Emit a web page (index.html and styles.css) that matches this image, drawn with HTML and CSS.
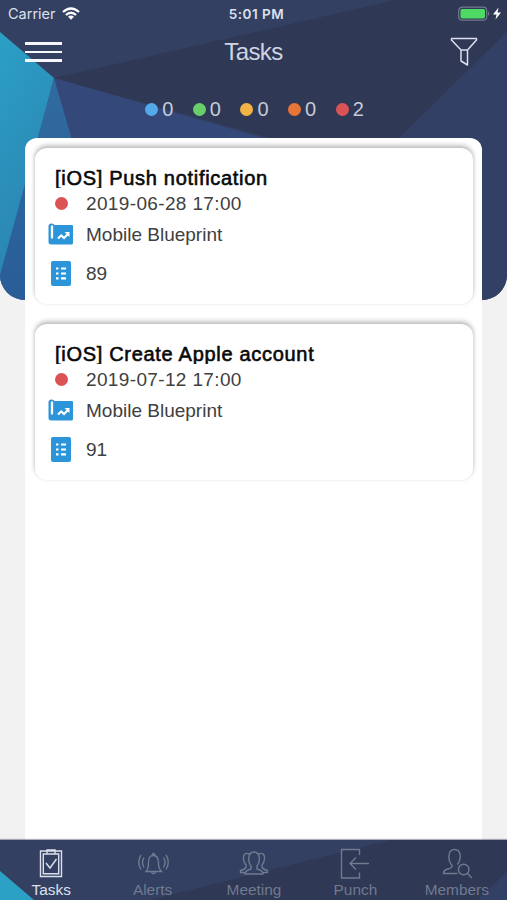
FILE: index.html
```html
<!DOCTYPE html>
<html lang="en">
<head>
<meta charset="utf-8">
<title>Tasks</title>
<link rel="stylesheet" href="styles.css">
</head>
<body>
<svg class="symbols" aria-hidden="true">
  <symbol id="blueprint" viewBox="0 0 26 23">
    <path d="M.5 19V3.500Q.5 .5 3.500 .5Q6 .5 6.500 2H24Q25 2 25 3V20Q25 21.500 23.500 21.500H3.500Q.5 21.500 .5 19Z" fill="#2c95da"/>
    <path d="M4 3.500V14.500" stroke="#fff" stroke-width="2.300" stroke-linecap="round" fill="none"/>
    <path d="M10 15.500l3.200-3 2.800 2.500 4-4" stroke="#fff" stroke-width="2.200" fill="none"/>
    <path d="M16.500 9h5v5z" fill="#fff"/>
  </symbol>
  <symbol id="list" viewBox="0 0 20 25">
    <rect width="20" height="25" rx="2" fill="#2c95da"/>
    <path d="M5 7.500h2.500M10 7.500h5M5 12.500h2.500M10 12.500h5M5 17.300h2.500M10 17.300h5" stroke="#fff" stroke-width="2.200" fill="none"/>
  </symbol>
</svg>
<div class="screen">
  <header class="hero">
    <svg class="facets" viewBox="0 0 507 300" preserveAspectRatio="none">
      <defs>
        <linearGradient id="teal" x1="0" y1="0" x2=".3" y2="1"><stop offset="0" stop-color="#2ba0c6"/><stop offset="1" stop-color="#2b82b0"/></linearGradient>
        <linearGradient id="blue" x1="0" y1="0" x2="0" y2="1"><stop offset="0" stop-color="#306b9e"/><stop offset="1" stop-color="#295d98"/></linearGradient>
      </defs>
      <rect width="507" height="300" fill="#334062"/>
      <path d="M54 78L396 0H507V32L399 138L270 138Z" fill="#2f3854"/>
      <path d="M507 32L399 138V300H507Z" fill="#334066"/>
      <path d="M54 78L270 140V300H54Z" fill="#34487a"/>
      <path d="M0 32L54 78L0 290Z" fill="url(#teal)"/>
      <path d="M54 78L72 140V300H0V275Z" fill="url(#blue)"/>
    </svg>
    <div class="status">
      <div class="carrier">Carrier
        <svg width="18" height="14" viewBox="0 0 18 14" fill="none" stroke="#fff" stroke-width="2.300"><path d="M1 5Q9-2 17 5M3.900 8Q9 3.500 14.100 8"/><path d="M9 12.800L6 9.700Q9 7.500 12 9.700Z" fill="#fff" stroke="none"/></svg>
      </div>
      <div class="clock">5:01 PM</div>
      <svg class="battery" width="44" height="16" viewBox="0 0 44 16"><rect x=".7" y="1.200" width="28" height="13" rx="3.500" fill="none" stroke="#747b8d" stroke-width="1.200"/><rect x="2.500" y="2.900" width="24.500" height="9.600" rx="1.700" fill="#4cd964"/><path d="M30 5.500q2.500 2.200 0 4.500z" fill="#747b8d"/><path d="M40.500 1.500L35 8.500H38.500L37.500 13.500L43 6.500H39.500Z" fill="#fff"/></svg>
    </div>
    <div class="toolbar">
      <div class="menu"><i></i><i></i><i></i></div>
      <h1>Tasks</h1>
      <svg class="funnel" width="28" height="30" viewBox="0 0 28 30" fill="none" stroke="#dce0ed" stroke-width="1.500" stroke-linejoin="round"><path d="M1.500 1.500H26.500V3L17.500 13V28L11 24V13L1.500 3ZM11 13H17.500"/></svg>
    </div>
    <div class="counts">
      <span><b class="dot sky"></b>0</span><span><b class="dot green"></b>0</span><span><b class="dot yellow"></b>0</span><span><b class="dot orange"></b>0</span><span><b class="dot red"></b>2</span>
    </div>
  </header>
  <main class="panel">
    <article class="card">
      <h2>[iOS] Push notification</h2>
      <div class="row date"><b class="dot red"></b><span>2019-06-28 17:00</span></div>
      <div class="row project"><svg width="26" height="23"><use href="#blueprint"/></svg><span>Mobile Blueprint</span></div>
      <div class="row number"><svg width="20" height="25"><use href="#list"/></svg><span>89</span></div>
    </article>
    <article class="card">
      <h2>[iOS] Create Apple account</h2>
      <div class="row date"><b class="dot red"></b><span>2019-07-12 17:00</span></div>
      <div class="row project"><svg width="26" height="23"><use href="#blueprint"/></svg><span>Mobile Blueprint</span></div>
      <div class="row number"><svg width="20" height="25"><use href="#list"/></svg><span>91</span></div>
    </article>
  </main>
  <nav class="tabs">
    <svg class="facets" viewBox="0 0 507 60"><rect width="507" height="60" fill="#334062"/><path d="M150 60L390 0H507V32L478 60Z" fill="#2f3854"/><path d="M507 32L478 60H507Z" fill="#334066"/><path d="M0 31L34 60H0Z" fill="#2ba1c6"/></svg>
    <a class="active"><svg viewBox="0 0 36 34"><path d="M7.500 5H28.500V30.500H7.500ZM10.300 8H25.700V27.700H10.300ZM14 4H22V8H14ZM13 17L17 22L23.500 13"/></svg><span>Tasks</span></a>
    <a><svg viewBox="0 0 36 34"><path d="M11 25.500Q13.500 23 13.500 17C13.500 11.500 15 9.500 18.500 9.500C22 9.500 23.500 11.500 23.500 17Q23.500 23 26.500 25.500ZM16 25.500Q18.500 30 21 25.500M17 9.500Q18.500 5 20 9.500M9 11.500Q6 16.500 9 21.500M28.500 11.500Q31.500 16.500 28.500 21.500M6 9Q1.500 16 6 23.500M31 9Q35.500 16 31 23.500"/></svg><span>Alerts</span></a>
    <a><svg viewBox="0 0 36 34"><path d="M9 28Q9 24.500 15 23V20C11.500 16 11.500 6 18 6C24.500 6 24.500 16 21 20V23Q27 24.500 27 28ZM13.500 8C9 6 7 9 7.500 13Q8 17 10 19V21Q9.500 23 4.500 24.500V26.500H9.500M22.500 8C27 6 29 9 28.500 13Q28 17 26 19V21Q26.500 23 31.500 24.500V26.500H26.500"/></svg><span>Meeting</span></a>
    <a><svg viewBox="0 0 36 34"><path d="M22.500 9V3.500H4.500V32H22.500V26.500M32 17.500H13M19 11.500L13 17.500L19 23.500"/></svg><span>Punch</span></a>
    <a><svg viewBox="0 0 36 34"><path d="M18.500 27.500H4.500Q4.500 24 9 23Q13.500 22 13 19.500C8.500 14 8.500 3.500 15.500 3.500C22.500 3.500 22.500 13 18.500 18.500M28.500 27.500L33 32"/><circle cx="24.700" cy="23.500" r="5.300"/></svg><span>Members</span></a>
  </nav>
</div>
</body>
</html>
```
FILE: styles.css
```css
* { box-sizing: border-box; }
body { margin: 0; background: #f2f2f2; font-family: "Liberation Sans", Arial, sans-serif; }
.symbols { position: absolute; width: 0; height: 0; }
.screen { width: 507px; height: 900px; display: flex; flex-direction: column; overflow: hidden; }
.hero { position: relative; flex: none; height: 300px; margin-bottom: -162px; border-radius: 0 0 25px 25px; overflow: hidden; color: #dce0ed; }
.facets { position: absolute; inset: 0; width: 100%; height: 100%; z-index: -1; }
.hero, .tabs { isolation: isolate; }
.status { height: 28px; display: grid; grid-template-columns: 1fr auto 1fr; align-items: center; padding: 0 5px 1px 8px; }
.carrier { display: flex; align-items: center; gap: 6px; font: 14.500px Inter, sans-serif; }
.clock { padding-left: 3px; font: 600 13.500px Inter, sans-serif; letter-spacing: .5px; }
.battery { justify-self: end; }
.toolbar { height: 50px; display: grid; grid-template-columns: 1fr auto 1fr; align-items: center; padding: 0 29px 2px 25px; }
.menu { width: 37px; display: grid; gap: 6px; }
.menu i { height: 2.500px; background: #f5f7fc; }
h1 { margin: 0; padding-left: 4px; font: 24px "Liberation Sans", Arial, sans-serif; letter-spacing: -.6px; color: #d0d5e3; }
.funnel { justify-self: end; }
.counts { display: flex; justify-content: center; gap: 19.500px; padding: 19px 0 0 2px; font: 20px/24px "Liberation Sans", Arial, sans-serif; color: #c5cad9; }
.counts span { display: flex; align-items: center; gap: 4px; }
.dot { display: block; width: 13px; height: 13px; border-radius: 50%; }
.sky { background: #54a9e9; }
.green { background: #66cf6a; }
.yellow { background: #f2b544; }
.orange { background: #e87538; }
.red { background: #dc5356; }
.panel { position: relative; flex: 1; margin: 0 25px; padding: 10px 9px; border-radius: 12px 12px 0 0; background: #fff; }
.card { height: 156px; margin: 0 0 20px 1px; padding: 18px 13px; border-radius: 12px; background: #fff; box-shadow: 0 -3px 5px rgba(0,0,0,.2), 0 -1px 4px rgba(0,0,0,.12); }
h2 { height: 22px; margin: 0 0 3px 7px; overflow: hidden; font: 20px/25px "Liberation Sans", Arial, sans-serif; letter-spacing: .7px; color: #090909; -webkit-text-stroke: .6px #090909; }
.row { display: grid; grid-template-columns: 26px auto; column-gap: 12px; align-items: center; justify-content: start; color: #404040; font: 19px/26px "Liberation Sans", Arial, sans-serif; }
.row > :first-child { justify-self: center; }
.row.date { letter-spacing: .36px; }
.row.date .dot { position: relative; top: -1px; }
.row.project { height: 36px; }
.row.project svg { position: relative; top: -1px; }
.row.number { height: 42px; }
.row.number svg { position: relative; top: -1px; }
.tabs { position: relative; flex: none; height: 60px; display: grid; grid-template-columns: repeat(5, 1fr); color: #707a90; box-shadow: 0 -1px 1px rgba(47,56,84,.4); }
.tabs a { display: flex; flex-direction: column; align-items: center; padding: 6px 0 0 1px; font: 15.400px/20px "Liberation Sans", Arial, sans-serif; }
.tabs a svg { width: 36px; height: 34px; fill: none; stroke: currentColor; stroke-width: 1.400; }
.tabs .active { color: #dce0ed; }
```
